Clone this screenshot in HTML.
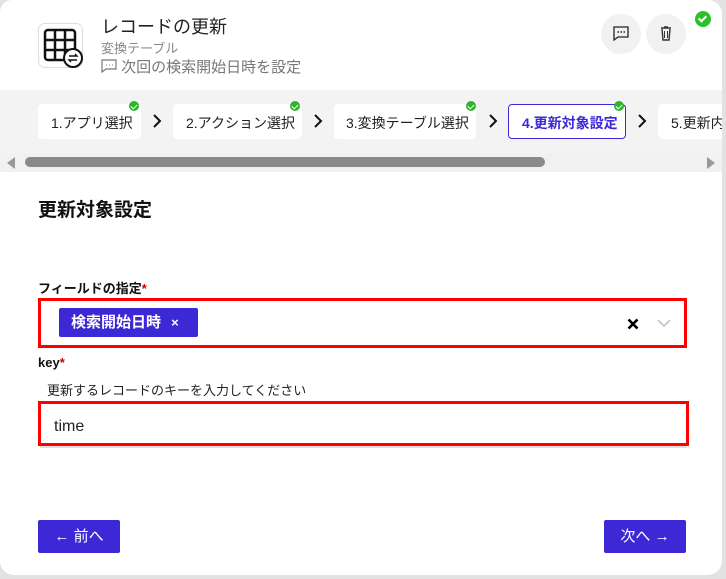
<!DOCTYPE html>
<html><head><meta charset="utf-8"><style>
*{margin:0;padding:0;box-sizing:border-box}
body{width:726px;height:579px;background:#e2e2e2;font-family:"Liberation Sans","Noto Sans CJK JP",sans-serif;position:relative;overflow:hidden}
.card{position:absolute;left:0;top:0;width:722px;height:575px;background:#fff;border-radius:0 0 14px 14px;overflow:hidden;border-top-right-radius:14px;border-top-left-radius:12px}
.abs{position:absolute}
.step{position:absolute;top:104px;height:35px;background:#fff;border-radius:4px;font-size:14px;line-height:38px;padding-left:13px;color:#222;white-space:nowrap}
.chk{position:absolute;width:10px;height:10px;border-radius:50%;background:#2cb52c;top:-3px}
.chk::after{content:"";position:absolute;left:3px;top:2px;width:3px;height:5px;border:solid #fff;border-width:0 1.3px 1.3px 0;transform:rotate(45deg)}
.chev{position:absolute;top:114px}
.btn{position:absolute;top:520px;height:33px;background:#3d28d6;color:#fff;border-radius:2px;font-size:15px;line-height:33px;text-align:center}
</style></head><body>
<div class="card">
 <div class="abs" style="left:38px;top:23px;width:45px;height:45px;border:1px solid #ddd;border-radius:7px;background:#fff">
  <svg width="45" height="45" viewBox="0 0 45 45"><g fill="none" stroke="#111" stroke-width="2.5"><rect x="6" y="6" width="30" height="30" rx="3"/><path d="M16 6v30M26 6v24M6 16h30M6 26h24"/></g><circle cx="34" cy="34" r="9" fill="#fff" stroke="#111" stroke-width="2"/><path d="M30 32h8l-2-2M38 36h-8l2 2" fill="none" stroke="#111" stroke-width="1.4"/></svg>
 </div>
 <div class="abs" style="left:101px;top:13px;font-size:18px;color:#222">レコードの更新</div>
 <div class="abs" style="left:101px;top:38px;font-size:13px;color:#888">変換テーブル</div>
 <div class="abs" style="left:101px;top:56px;font-size:15px;color:#777"><svg width="16" height="14" viewBox="0 0 16 14" style="vertical-align:-1px"><path d="M1 1h14v9H5l-4 3z" fill="none" stroke="#777" stroke-width="1.2"/><path d="M5 6h1M8 6h1M11 6h1" stroke="#777"/></svg> 次回の検索開始日時を設定</div>
 <div class="abs" style="left:601px;top:14px;width:40px;height:40px;border-radius:50%;background:#f1f1f1"><svg width="40" height="40" viewBox="0 0 40 40"><path d="M13 13h14v10H17l-4 3z" fill="none" stroke="#222" stroke-width="1.3"/><path d="M16.5 18h1.5M19.5 18h1.5M22.5 18h1.5" stroke="#222" stroke-width="1.5"/></svg></div>
 <div class="abs" style="left:646px;top:14px;width:40px;height:40px;border-radius:50%;background:#f1f1f1"><svg width="40" height="40" viewBox="0 0 40 40"><path d="M15 14h10M18 13h4M16 15l1 11h6l1-11" fill="none" stroke="#333" stroke-width="1.4"/><path d="M18.5 17v7M21.5 17v7" stroke="#333"/></svg></div>
 <div class="abs" style="left:695px;top:11px;width:16px;height:16px;border-radius:50%;background:#2cbf2c"><div style="position:absolute;left:5px;top:2.5px;width:5px;height:8px;border:solid #fff;border-width:0 2px 2px 0;transform:rotate(45deg)"></div></div>

 <div class="abs" style="left:0;top:90px;width:722px;height:82px;background:#f3f3f3"></div>
 <div class="step" style="left:38px;width:103px">1.アプリ選択<span class="chk" style="left:91px"></span></div>
 <svg class="chev" style="left:152px" width="10" height="14" viewBox="0 0 10 14"><path d="M2 1l6 6-6 6" fill="none" stroke="#111" stroke-width="2"/></svg>
 <div class="step" style="left:173px;width:129px">2.アクション選択<span class="chk" style="left:117px"></span></div>
 <svg class="chev" style="left:313px" width="10" height="14" viewBox="0 0 10 14"><path d="M2 1l6 6-6 6" fill="none" stroke="#111" stroke-width="2"/></svg>
 <div class="step" style="left:334px;width:142px;padding-left:12px">3.変換テーブル選択<span class="chk" style="left:132px"></span></div>
 <svg class="chev" style="left:488px" width="10" height="14" viewBox="0 0 10 14"><path d="M2 1l6 6-6 6" fill="none" stroke="#111" stroke-width="2"/></svg>
 <div class="step" style="left:508px;width:118px;border:1px solid #3d28d6;color:#3d28d6;font-weight:bold;line-height:36px">4.更新対象設定<span class="chk" style="left:105px;top:-4px"></span></div>
 <svg class="chev" style="left:637px" width="10" height="14" viewBox="0 0 10 14"><path d="M2 1l6 6-6 6" fill="none" stroke="#111" stroke-width="2"/></svg>
 <div class="step" style="left:658px;width:80px">5.更新内容</div>
 <div class="abs" style="left:0;top:153px;width:722px;height:19px;background:#f1f1f1"></div>
 <div class="abs" style="left:7px;top:157px;width:0;height:0;border-top:6px solid transparent;border-bottom:6px solid transparent;border-right:8px solid #999"></div>
 <div class="abs" style="left:707px;top:157px;width:0;height:0;border-top:6px solid transparent;border-bottom:6px solid transparent;border-left:8px solid #999"></div>
 <div class="abs" style="left:25px;top:157px;width:520px;height:10px;border-radius:5px;background:#8a8a8a"></div>

 <div class="abs" style="left:38px;top:195px;font-size:19px;font-weight:bold;color:#111">更新対象設定</div>
 <div class="abs" style="left:38px;top:278px;font-size:13px;font-weight:bold;color:#111">フィールドの指定<span style="color:#c00">*</span></div>
 <div class="abs" style="left:38px;top:298px;width:649px;height:50px;border:3px solid #f00"></div>
 <div class="abs" style="left:59px;top:308px;width:139px;height:29px;background:#3d28d6;border-radius:2px;color:#fff;font-size:15px;font-weight:bold;line-height:30px;padding-left:12px">検索開始日時 <span style="font-size:13px;margin-left:6px">×</span></div>
 <svg class="abs" style="left:627px;top:318px" width="12" height="12" viewBox="0 0 12 12"><path d="M1.5 1.5l9 9M10.5 1.5l-9 9" stroke="#000" stroke-width="2.6"/></svg>
 <svg class="abs" style="left:657px;top:319px" width="14" height="9" viewBox="0 0 14 9"><path d="M1 1l6 6 6-6" fill="none" stroke="#ccc" stroke-width="2"/></svg>
 <div class="abs" style="left:38px;top:355px;font-size:13px;font-weight:bold;color:#111">key<span style="color:#c00">*</span></div>
 <div class="abs" style="left:47px;top:380px;font-size:13px;color:#222">更新するレコードのキーを入力してください</div>
 <div class="abs" style="left:38px;top:401px;width:651px;height:45px;border:3px solid #f00;font-size:16px;line-height:45px;padding-left:13px;color:#222">time</div>
 <div class="abs" style="left:40px;top:446px;width:647px;height:2px;background:#ddd"></div>

 <div class="btn" style="left:38px;width:82px">← 前へ</div>
 <div class="btn" style="left:604px;width:82px">次へ →</div>
</div>
</body></html>
